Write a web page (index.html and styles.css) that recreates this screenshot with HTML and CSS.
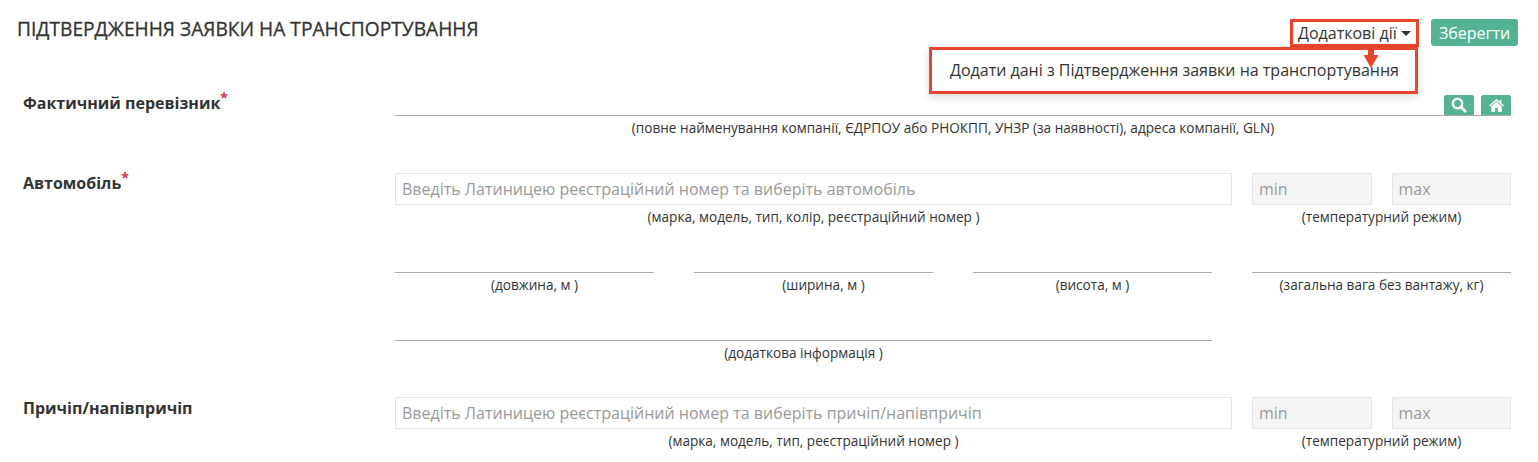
FILE: index.html
```html
<!DOCTYPE html>
<html lang="uk">
<head>
  <meta charset="UTF-8">
  <title>Підтвердження заявки на транспортування</title>
  <link rel="stylesheet" href="styles.css">
</head>
<body>
  <!-- Header -->
  <div class="page-header">
    <h1>ПІДТВЕРДЖЕННЯ ЗАЯВКИ НА ТРАНСПОРТУВАННЯ</h1>
    <div class="actions">
      <div class="more-actions">
        <button class="more-btn">Додаткові дії<span class="caret"></span></button>
        <div class="more-menu">Додати дані з Підтвердження заявки на транспортування</div>
        <svg class="arrow" width="16" height="19" viewBox="0 0 16 19"><path d="M5 0h6v5h4.500L8 18 .5 5H5z" fill="#e8452c"/></svg>
      </div>
      <button class="save-btn">Зберегти</button>
    </div>
  </div>

  <!-- Carrier -->
  <div class="form-row carrier-row">
    <div class="row-label">Фактичний перевізник<sup class="req">*</sup></div>
    <div class="row-fields">
      <div class="field">
        <div class="line-box">
          <button class="icon-btn">
            <svg width="16" height="16" viewBox="0 0 16 16"><circle cx="6.500" cy="6.500" r="4.700" fill="none" stroke="#fff" stroke-width="2.400"/><path d="M10 10l4.200 4.200" stroke="#fff" stroke-width="2.800" stroke-linecap="round"/></svg>
          </button>
          <button class="icon-btn">
            <svg width="15" height="13" viewBox="0 0 15 13"><path d="M7.500 0L0 6.400l.9 1L7.500 1.900l6.600 5.500.9-1-2.500-2.100V1h-1.800v1.800z" fill="#fff"/><path d="M7.500 3L2.300 7.300V13h3.800V9h2.800v4h3.800V7.300z" fill="#fff"/></svg>
          </button>
        </div>
        <div class="hint">(повне найменування компанії, ЄДРПОУ або РНОКПП, УНЗР (за наявності), адреса компанії, GLN)</div>
      </div>
    </div>
  </div>

  <!-- Vehicle -->
  <div class="form-row vehicle-row">
    <div class="row-label">Автомобіль<sup class="req">*</sup></div>
    <div class="row-fields">
      <div class="fields-line">
        <div class="field w-main">
          <input class="text-input" placeholder="Введіть Латиницею реєстраційний номер та виберіть автомобіль">
          <div class="hint">(марка, модель, тип, колір, реєстраційний номер )</div>
        </div>
        <div class="field w-temp">
          <div class="temp-inputs">
            <input class="text-input temp-input" placeholder="min" disabled>
            <input class="text-input temp-input" placeholder="max" disabled>
          </div>
          <div class="hint">(температурний режим)</div>
        </div>
      </div>
      <div class="fields-line dims-line">
        <div class="field w-wide"><div class="line-box"></div><div class="hint hint-shift">(довжина, м )</div></div>
        <div class="field w-narrow"><div class="line-box"></div><div class="hint hint-shift">(ширина, м )</div></div>
        <div class="field w-narrow"><div class="line-box"></div><div class="hint">(висота, м )</div></div>
        <div class="field w-temp"><div class="line-box"></div><div class="hint">(загальна вага без вантажу, кг)</div></div>
      </div>
      <div class="fields-line info-line">
        <div class="field w-info"><div class="line-box"></div><div class="hint">(додаткова інформація )</div></div>
      </div>
    </div>
  </div>

  <!-- Trailer -->
  <div class="form-row trailer-row">
    <div class="row-label">Причіп/напівпричіп</div>
    <div class="row-fields">
      <div class="fields-line">
        <div class="field w-main">
          <input class="text-input" placeholder="Введіть Латиницею реєстраційний номер та виберіть причіп/напівпричіп">
          <div class="hint">(марка, модель, тип, реєстраційний номер )</div>
        </div>
        <div class="field w-temp">
          <div class="temp-inputs">
            <input class="text-input temp-input" placeholder="min" disabled>
            <input class="text-input temp-input" placeholder="max" disabled>
          </div>
          <div class="hint">(температурний режим)</div>
        </div>
      </div>
    </div>
  </div>
</body>
</html>
```

FILE: styles.css
```css
/* General */
html, body {
  height: 462px;
  overflow: hidden;
}

body {
  margin: 0;
  font-family: "Open Sans", sans-serif;
  font-size: 16px;
  color: #333;
  background: #fff;
}

button {
  font-family: inherit;
  cursor: pointer;
}

/* Header */
.page-header {
  display: flex;
  justify-content: space-between;
  align-items: flex-start;
  height: 62px;
  padding: 19px 20px 0 17px;
  box-sizing: border-box;
}

h1 {
  margin: 0;
  font-size: 19.200px;
  line-height: 20px;
  font-weight: 500;
  -webkit-text-stroke: 0.3px #333;
}

.actions {
  display: flex;
  align-items: flex-start;
  gap: 12px;
}

.more-actions {
  position: relative;
}

.more-btn {
  display: flex;
  align-items: center;
  width: 129px;
  height: 28px;
  padding: 0 0 0 5px;
  border: 3px solid #e8452c;
  background: #fff;
  color: #333;
  font-size: 16px;
  white-space: nowrap;
  box-sizing: border-box;
}

.caret {
  margin-left: 4px;
  border-top: 5px solid #333;
  border-left: 5px solid transparent;
  border-right: 5px solid transparent;
}

.more-menu {
  position: absolute;
  top: 28px;
  right: 1px;
  width: 489px;
  height: 47px;
  padding-left: 18px;
  border: 3px solid #e8452c;
  background: #fff;
  box-shadow: 0 3px 8px rgba(0, 0, 0, 0.15);
  box-sizing: border-box;
  font-size: 16px;
  line-height: 41px;
  white-space: nowrap;
}

.arrow {
  position: absolute;
  top: 31px;
  left: 73px;
}

.save-btn {
  width: 87px;
  height: 27px;
  padding: 0;
  border: 0;
  border-radius: 3px;
  background: #54b295;
  color: #fff;
  font-size: 16px;
}

/* Form rows */
.form-row {
  display: flex;
  padding: 0 27px 0 23px;
}

.row-label {
  width: 372px;
  flex-shrink: 0;
  font-size: 16px;
  font-weight: 700;
  line-height: 20px;
}

.req {
  color: #d9304f;
  font-size: 14px;
  line-height: 0;
}

.row-fields {
  flex: 1;
}

.carrier-row {
  height: 111px;
  padding-top: 30px;
  box-sizing: border-box;
}

.carrier-row .row-label {
  margin-top: 1px;
}

.vehicle-row {
  height: 224px;
}

.trailer-row .row-label {
  margin-top: 1px;
}

.fields-line {
  display: flex;
  gap: 40px;
}

.vehicle-row .fields-line:first-child,
.trailer-row .fields-line {
  gap: 20px;
}

.dims-line,
.info-line {
  margin-top: 16px;
}

.field {
  min-width: 0;
}

.w-main { width: 837px; }
.w-info { width: 817px; }
.w-temp { width: 259px; }
.w-wide { width: 259px; }
.w-narrow { width: 239px; }

.line-box {
  display: flex;
  justify-content: flex-end;
  gap: 7px;
  height: 31px;
  border-bottom: 1px solid #a8a8a8;
  box-sizing: border-box;
}

.carrier-row .line-box {
  height: 24px;
  padding-top: 3px;
}

.icon-btn {
  display: flex;
  align-items: center;
  justify-content: center;
  width: 30px;
  height: 20px;
  padding: 0;
  border: 0;
  border-radius: 2px 2px 0 0;
  background: #54b295;
}

.hint {
  margin-top: 3px;
  font-size: 13.600px;
  line-height: 18px;
  text-align: center;
  white-space: nowrap;
  color: #333;
}

.hint-shift {
  padding-left: 20px;
}

.text-input {
  display: block;
  width: 100%;
  height: 32px;
  padding: 0 6px;
  border: 1px solid #e5e5e5;
  background: #fff;
  box-sizing: border-box;
  font-family: inherit;
  font-size: 16px;
}

.text-input::placeholder {
  color: #999;
  opacity: 1;
}

.temp-inputs {
  display: flex;
  gap: 20px;
}

.temp-input {
  flex: 1;
  min-width: 0;
  background: #f5f5f5;
}
```
